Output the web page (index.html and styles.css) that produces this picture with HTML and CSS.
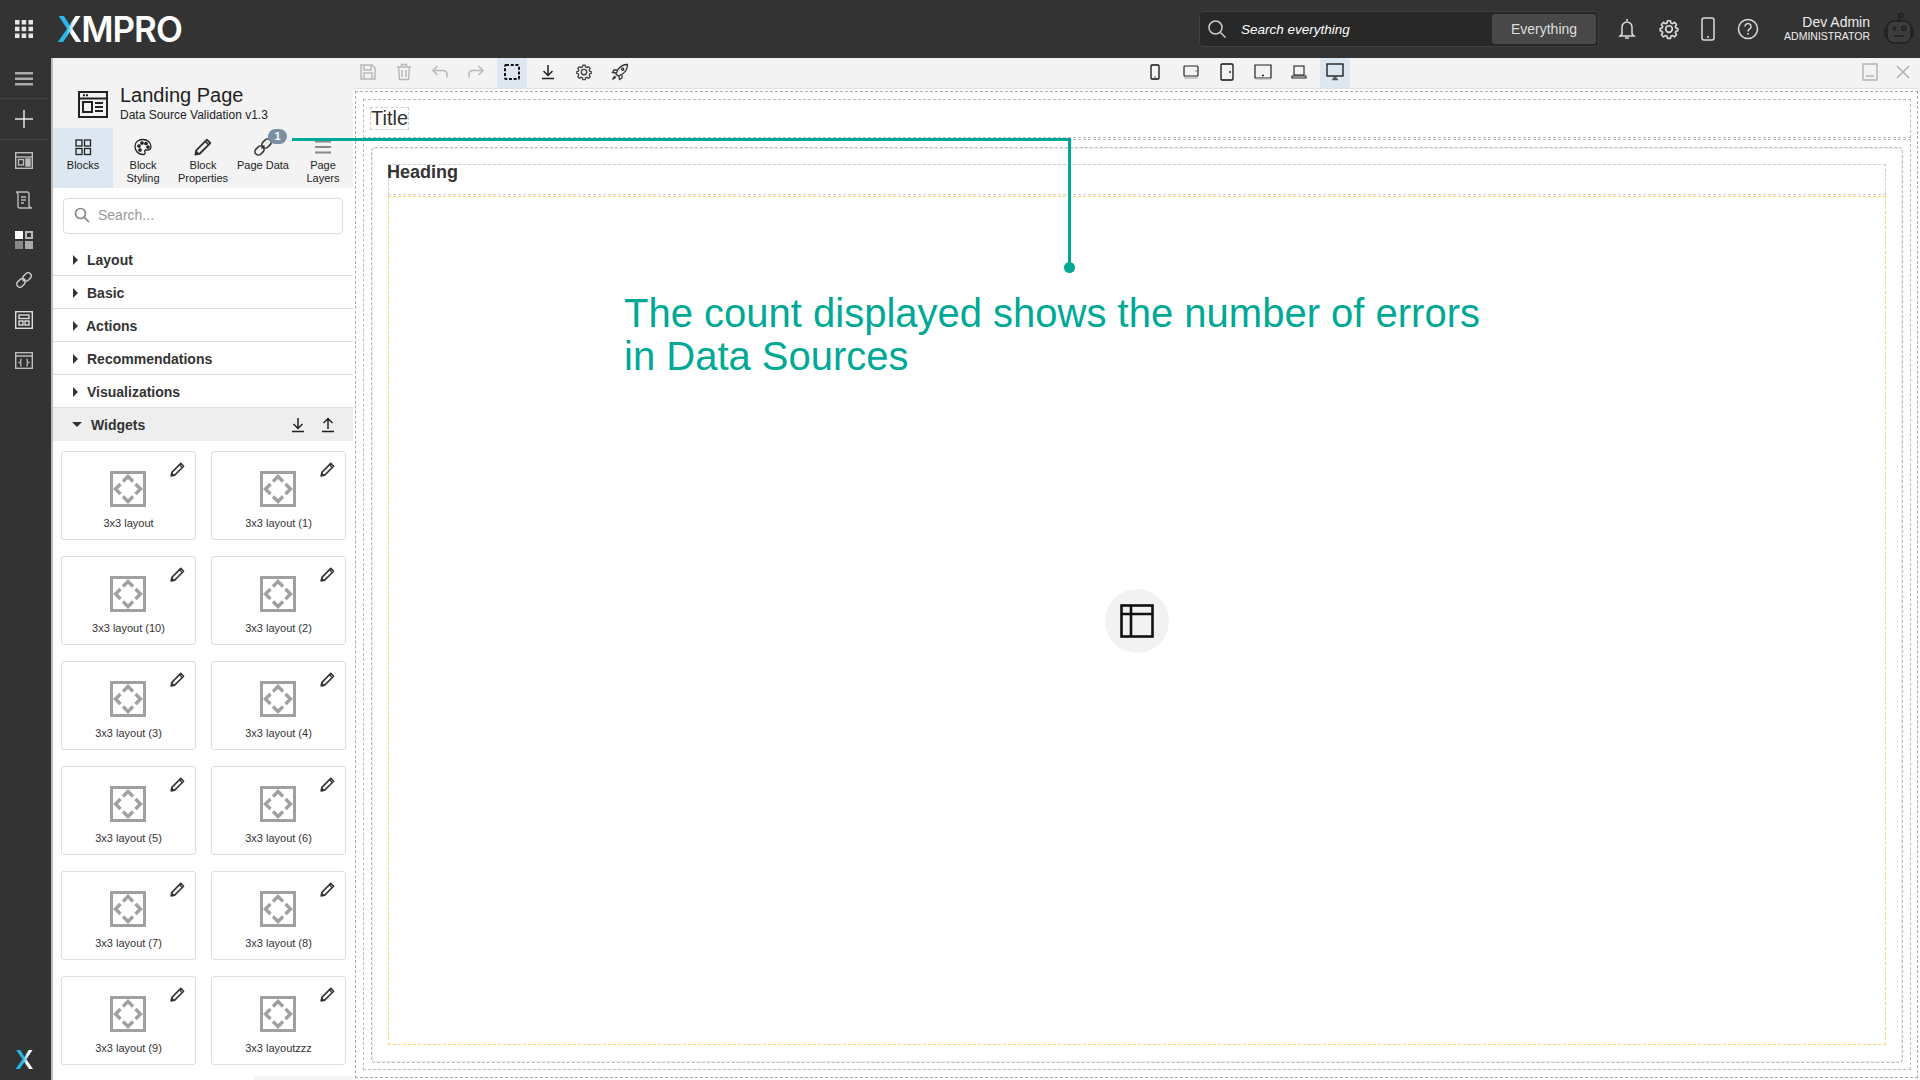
FILE: index.html
```html
<!DOCTYPE html>
<html lang="en">
<head>
  <meta charset="UTF-8" />
  <title>Landing Page</title>
  <link rel="stylesheet" href="styles.css">
</head>
<body>
  <svg class="defs" width="0" height="0">
    <symbol id="i-pencil" viewBox="0 0 16 16"><path d="M11.500 1.500l3 3L5 14l-3.800.8L2 11z" fill="none" stroke="currentColor" stroke-width="1.700" stroke-linejoin="round"/><path d="M10 3l3 3" stroke="currentColor" stroke-width="1.400"/><path d="M2 11l3 3-3.800.8z" fill="currentColor"/></symbol>
    <symbol id="i-layout" viewBox="0 0 36 36"><rect x="1.500" y="1.500" width="33" height="33" fill="none" stroke="#a0a0a0" stroke-width="3"/><path d="M13 10.500L18 5.500l5 5M25.500 13L30.500 18l-5 5M23 25.500L18 30.500l-5-5M10.500 23L5.500 18l5-5" fill="none" stroke="#a0a0a0" stroke-width="3.400"/></symbol>
    <symbol id="i-gear" viewBox="0 0 24 24"><path d="M10 2h4l.6 3 2.300 1 2.600-1.700 2.800 2.800L20.600 9.700l1 2.300 2.400.6v3l-2.400.6-1 2.300 1.700 2.600-2.800 2.800-2.600-1.700-2.300 1-.6 2.800h-4l-.6-2.800-2.300-1-2.600 1.700-2.800-2.800 1.700-2.600-1-2.300L0 15.600v-3l2.400-.6 1-2.300L1.700 7.100l2.800-2.800L7.100 6l2.300-1z" transform="translate(2.400 1.400) scale(.8)" fill="none" stroke="currentColor" stroke-width="2.200" stroke-linejoin="round"/><circle cx="12" cy="12" r="3.600" fill="none" stroke="currentColor" stroke-width="1.800"/></symbol>
    <symbol id="i-down" viewBox="0 0 16 16"><path d="M8 1v10M3.500 7L8 11.500 12.500 7M2 14.500h12" fill="none" stroke="currentColor" stroke-width="1.500"/></symbol>
    <symbol id="i-up" viewBox="0 0 16 16"><path d="M8 12V2M3.500 6L8 1.500 12.500 6M2 14.500h12" fill="none" stroke="currentColor" stroke-width="1.500"/></symbol>
    <symbol id="i-link" viewBox="0 0 20 20"><path d="M8.500 11.500l3-3" stroke="currentColor" stroke-width="1.600"/><rect x="10" y="1.500" width="7" height="10" rx="3.500" transform="rotate(45 13.500 6.500)" fill="none" stroke="currentColor" stroke-width="1.600"/><rect x="3" y="8.500" width="7" height="10" rx="3.500" transform="rotate(45 6.500 13.500)" fill="none" stroke="currentColor" stroke-width="1.600"/></symbol>
  </svg>

  <div class="app">
    <header class="topbar">
      <button class="apps" aria-label="Apps">
        <svg width="20" height="20" viewBox="0 0 20 20" fill="#e6e6e6"><rect x="1" y="1" width="4.500" height="4.500"/><rect x="7.700" y="1" width="4.500" height="4.500"/><rect x="14.500" y="1" width="4.500" height="4.500"/><rect x="1" y="7.700" width="4.500" height="4.500"/><rect x="7.700" y="7.700" width="4.500" height="4.500"/><rect x="14.500" y="7.700" width="4.500" height="4.500"/><rect x="1" y="14.500" width="4.500" height="4.500"/><rect x="7.700" y="14.500" width="4.500" height="4.500"/><rect x="14.500" y="14.500" width="4.500" height="4.500"/></svg>
      </button>
      <div class="logo"><span class="logo-x">X</span>MPRO</div>

      <div class="global-search">
        <svg width="20" height="20" viewBox="0 0 20 20" fill="none" stroke="#ccc" stroke-width="1.500"><circle cx="8.500" cy="8.500" r="6.500"/><path d="M13.500 13.500l5 5"/></svg>
        <span class="global-search-text">Search everything</span>
        <span class="scope">Everything</span>
      </div>

      <div class="top-icons">
        <svg width="18" height="22" viewBox="0 0 18 22" fill="none" stroke="#ddd" stroke-width="1.500"><path d="M9 1v2M4 16V9a5 5 0 0 1 10 0v7l2 2H2zM7 20h4"/></svg>
        <svg class="top-gear" width="22" height="22"><use href="#i-gear"/></svg>
        <svg width="14" height="24" viewBox="0 0 14 24" fill="none" stroke="#ddd" stroke-width="1.500"><rect x="1" y="1" width="12" height="22" rx="2"/><path d="M6 20h2"/></svg>
        <svg width="22" height="22" viewBox="0 0 22 22" fill="none" stroke="#ddd" stroke-width="1.500"><circle cx="11" cy="11" r="9.500"/><path d="M8 8.500a3 3 0 1 1 4.500 2.600c-1 .6-1.500 1.200-1.500 2.400M11 15v1.800"/></svg>
      </div>

      <div class="user">
        <div class="user-name">Dev Admin</div>
        <div class="user-role">ADMINISTRATOR</div>
      </div>
      <svg class="avatar" width="30" height="34" viewBox="0 0 30 34" fill="none" stroke="#1f1f1f" stroke-width="1.500"><rect x="3" y="9" width="24" height="22" rx="7" fill="#3c3c3c"/><path d="M15 9V5M3 17H1v7h2M27 17h2v7h-2M10 24h10"/><circle cx="17" cy="3.500" r="2"/><path d="M9 15l3 3m0-3l-3 3"/><circle cx="20" cy="16.500" r="2"/></svg>
    </header>

    <div class="workspace">
      <nav class="rail">
        <div class="rail-item rail-top">
          <svg width="18" height="14" viewBox="0 0 18 14" fill="#aaa"><rect width="18" height="2.500"/><rect y="5.500" width="18" height="2.500"/><rect y="11" width="18" height="2.500"/></svg>
        </div>
        <div class="rail-item rail-add">
          <svg width="18" height="18" viewBox="0 0 18 18" fill="#eee"><rect x="8.300" width="1.400" height="18"/><rect y="8.300" width="18" height="1.400"/></svg>
        </div>
        <div class="rail-item">
          <svg width="18" height="17" viewBox="0 0 18 17" fill="none" stroke="#bbb" stroke-width="1.400"><rect x=".7" y=".7" width="16.600" height="15.600"/><path d="M1 5h16"/><rect x="3.500" y="7.500" width="5" height="5.500"/><rect x="11" y="7" width="4" height="7" fill="#bbb"/></svg>
        </div>
        <div class="rail-item">
          <svg width="18" height="18" viewBox="0 0 18 18" fill="none" stroke="#bbb" stroke-width="1.400"><path d="M1 1h11c1.500 0 2 1 2 2v11c0 2 1 3 3 3H5c-1.500 0-2-1-2-2V3.500C3 2 2 1 1 1zM6 6h5M6 9h5M6 12h3"/></svg>
        </div>
        <div class="rail-item">
          <svg width="18" height="18" viewBox="0 0 18 18"><rect width="8" height="8" fill="#fff"/><rect x="10" width="8" height="8" fill="#bbb"/><rect x="12" y="2" width="4" height="4" fill="#333"/><rect y="10" width="8" height="8" fill="#888"/><rect x="10" y="10" width="8" height="8" fill="#aaa"/></svg>
        </div>
        <div class="rail-item rail-link">
          <svg width="18" height="18"><use href="#i-link"/></svg>
        </div>
        <div class="rail-item">
          <svg width="18" height="18" viewBox="0 0 18 18" fill="none" stroke="#ddd" stroke-width="1.400"><rect x=".7" y=".7" width="16.600" height="16.600"/><rect x="4" y="4" width="10" height="3.500"/><rect x="4" y="10" width="4" height="4"/><rect x="10" y="10" width="4" height="4"/></svg>
        </div>
        <div class="rail-item">
          <svg width="18" height="17" viewBox="0 0 18 17" fill="none" stroke="#bbb" stroke-width="1.400"><rect x=".7" y=".7" width="16.600" height="15.600"/><path d="M1 4h16M6.500 7C5 7 6.500 10 5 10.500 6.500 11 5 14 6.500 14M11.500 7c1.500 0 0 3 1.500 3.500-1.500.5 0 3.500-1.500 3.500"/></svg>
        </div>
        <div class="rail-logo logo-x">X</div>
      </nav>

      <aside class="panel">
        <div class="panel-head">
          <svg class="panel-icon" width="30" height="27" viewBox="0 0 30 27" fill="none" stroke="#222" stroke-width="2"><rect x="1" y="1" width="28" height="25"/><path d="M1 7.500h28"/><path d="M5 4.300h6" stroke-dasharray="2 1"/><rect x="5" y="11" width="9" height="10"/><path d="M17 12h8M17 16h8M17 20h8"/></svg>
          <div>
            <div class="panel-title">Landing Page</div>
            <div class="panel-sub">Data Source Validation v1.3</div>
          </div>
        </div>

        <div class="tabs">
          <div class="tab tab-on">
            <svg width="20" height="20" viewBox="0 0 20 20" fill="none" stroke="#222" stroke-width="1.300"><rect x="3" y="3" width="6" height="6"/><rect x="11.500" y="3" width="6" height="6"/><rect x="3" y="11.500" width="6" height="6"/><rect x="11.500" y="11.500" width="6" height="6"/></svg>
            <span>Blocks</span>
          </div>
          <div class="tab">
            <svg width="20" height="20" viewBox="0 0 20 20" fill="none" stroke="#222" stroke-width="1.300"><path d="M10 2.500c4.500 0 8 3 8 7s-3 3.500-5 3.500c-1.500 0-1.500 1-1 2s0 2.500-2 2.500c-4.500 0-8-3.500-8-8s3.500-7 8-7z"/><circle cx="6" cy="9" r="1.200" fill="#222"/><circle cx="9" cy="6" r="1.200" fill="#222"/><circle cx="13" cy="6.500" r="1.200" fill="#222"/><circle cx="15" cy="10" r="1.200" fill="#222"/><circle cx="7" cy="13" r="1.200" fill="#222"/></svg>
            <span>Block Styling</span>
          </div>
          <div class="tab">
            <svg class="tab-pencil" width="18" height="20"><use href="#i-pencil"/></svg>
            <span>Block Properties</span>
          </div>
          <div class="tab">
            <svg class="tab-link" width="20" height="20"><use href="#i-link"/></svg>
            <span class="badge">1</span>
            <span>Page Data</span>
          </div>
          <div class="tab">
            <svg width="20" height="20" viewBox="0 0 20 20" fill="#888"><rect x="2" y="3.500" width="16" height="2"/><rect x="2" y="9" width="16" height="2"/><rect x="2" y="14.500" width="16" height="2"/></svg>
            <span>Page Layers</span>
          </div>
        </div>

        <div class="search-wrap">
          <div class="search">
            <svg width="16" height="16" viewBox="0 0 16 16" fill="none" stroke="#888" stroke-width="1.700"><circle cx="6.500" cy="6.500" r="5"/><path d="M10.300 10.300L15 15"/></svg>
            <span>Search...</span>
          </div>
        </div>

        <div class="group"><i class="arrow"></i><span>Layout</span></div>
        <div class="group"><i class="arrow"></i><span>Basic</span></div>
        <div class="group"><i class="arrow"></i><span class="tight">Actions</span></div>
        <div class="group"><i class="arrow"></i><span>Recommendations</span></div>
        <div class="group"><i class="arrow"></i><span>Visualizations</span></div>
        <div class="group group-open">
          <i class="arrow-down"></i><span>Widgets</span>
          <svg class="group-act" width="16" height="16"><use href="#i-down"/></svg>
          <svg class="group-act" width="16" height="16"><use href="#i-up"/></svg>
        </div>

        <div class="cards">
          <div class="card"><svg class="card-edit" width="15" height="15"><use href="#i-pencil"/></svg><svg class="card-icon" width="36" height="36"><use href="#i-layout"/></svg><span>3x3 layout</span></div>
          <div class="card"><svg class="card-edit" width="15" height="15"><use href="#i-pencil"/></svg><svg class="card-icon" width="36" height="36"><use href="#i-layout"/></svg><span>3x3 layout (1)</span></div>
          <div class="card"><svg class="card-edit" width="15" height="15"><use href="#i-pencil"/></svg><svg class="card-icon" width="36" height="36"><use href="#i-layout"/></svg><span>3x3 layout (10)</span></div>
          <div class="card"><svg class="card-edit" width="15" height="15"><use href="#i-pencil"/></svg><svg class="card-icon" width="36" height="36"><use href="#i-layout"/></svg><span>3x3 layout (2)</span></div>
          <div class="card"><svg class="card-edit" width="15" height="15"><use href="#i-pencil"/></svg><svg class="card-icon" width="36" height="36"><use href="#i-layout"/></svg><span>3x3 layout (3)</span></div>
          <div class="card"><svg class="card-edit" width="15" height="15"><use href="#i-pencil"/></svg><svg class="card-icon" width="36" height="36"><use href="#i-layout"/></svg><span>3x3 layout (4)</span></div>
          <div class="card"><svg class="card-edit" width="15" height="15"><use href="#i-pencil"/></svg><svg class="card-icon" width="36" height="36"><use href="#i-layout"/></svg><span>3x3 layout (5)</span></div>
          <div class="card"><svg class="card-edit" width="15" height="15"><use href="#i-pencil"/></svg><svg class="card-icon" width="36" height="36"><use href="#i-layout"/></svg><span>3x3 layout (6)</span></div>
          <div class="card"><svg class="card-edit" width="15" height="15"><use href="#i-pencil"/></svg><svg class="card-icon" width="36" height="36"><use href="#i-layout"/></svg><span>3x3 layout (7)</span></div>
          <div class="card"><svg class="card-edit" width="15" height="15"><use href="#i-pencil"/></svg><svg class="card-icon" width="36" height="36"><use href="#i-layout"/></svg><span>3x3 layout (8)</span></div>
          <div class="card"><svg class="card-edit" width="15" height="15"><use href="#i-pencil"/></svg><svg class="card-icon" width="36" height="36"><use href="#i-layout"/></svg><span>3x3 layout (9)</span></div>
          <div class="card"><svg class="card-edit" width="15" height="15"><use href="#i-pencil"/></svg><svg class="card-icon" width="36" height="36"><use href="#i-layout"/></svg><span>3x3 layoutzzz</span></div>
        </div>
        <div class="panel-scroll"></div>
      </aside>

      <main class="editor">
        <div class="toolbar">
          <div class="tools">
            <button class="tool tool-off"><svg width="18" height="18" viewBox="0 0 18 18" fill="none" stroke="currentColor" stroke-width="1.500"><path d="M2 2h11l3 3v11H2zM5 2v5h7V2M5 16v-6h8v6"/></svg></button>
            <button class="tool tool-off"><svg width="18" height="18" viewBox="0 0 18 18" fill="none" stroke="currentColor" stroke-width="1.500"><path d="M2 4h14M6.500 4V1.500h5V4M3.500 4l1 12.500h9l1-12.500M7 7v7M11 7v7"/></svg></button>
            <button class="tool tool-off"><svg width="18" height="18" viewBox="0 0 18 18" fill="none" stroke="currentColor" stroke-width="1.500"><path d="M6.500 3L2 7.500 6.500 12M2 7.500h10c3 0 4 2 4 4v3"/></svg></button>
            <button class="tool tool-off"><svg width="18" height="18" viewBox="0 0 18 18" fill="none" stroke="currentColor" stroke-width="1.500"><path d="M11.500 3L16 7.500 11.500 12M16 7.500H6c-3 0-4 2-4 4v3"/></svg></button>
            <button class="tool tool-on"><svg width="18" height="18" viewBox="0 0 18 18" fill="none" stroke="#111" stroke-width="2"><rect x="2" y="2" width="14" height="14" rx="1" stroke-dasharray="3 1.700"/></svg></button>
            <button class="tool"><svg width="16" height="16"><use href="#i-down"/></svg></button>
            <button class="tool tool-soft"><svg width="18" height="18"><use href="#i-gear"/></svg></button>
            <button class="tool"><svg width="18" height="18" viewBox="0 0 18 18" fill="none" stroke="#333" stroke-width="1.300"><path d="M16.500 1.500c-4 0-7 1.500-9.500 5L5 11l2 2 4.500-2c3.500-2.500 5-5.500 5-9.500z"/><circle cx="11.700" cy="6.300" r="1.100"/><path d="M6 7H3L1.500 9.500 5 10M11 12v3l-2.500 1.500L8 13M4 13l-2.500 3.500L5 14"/></svg></button>
          </div>
          <div class="tools devices">
            <button class="tool"><svg width="10" height="16" viewBox="0 0 10 16" fill="none" stroke="#111" stroke-width="1.300"><rect x="1" y="1" width="8" height="14" rx="1"/><path d="M5 12.500v1"/></svg></button>
            <button class="tool"><svg width="16" height="14" viewBox="0 0 16 14" fill="none" stroke="#222" stroke-width="1.200"><rect x="1" y="1" width="14" height="10" rx="1"/><path d="M12.500 6h1"/><path d="M1 13h14" stroke="#aaa"/></svg></button>
            <button class="tool"><svg width="14" height="18" viewBox="0 0 14 18" fill="none" stroke="#111" stroke-width="1.300"><rect x="1" y="1" width="12" height="16" rx="1"/><path d="M10 8v2"/></svg></button>
            <button class="tool"><svg width="18" height="16" viewBox="0 0 18 16" fill="none" stroke="#222" stroke-width="1.200"><path d="M1 14V1h16v13z"/><path d="M8 11.500h2" stroke-width="1.600"/><path d="M1 15.300h16" stroke="#ccc"/></svg></button>
            <button class="tool"><svg width="16" height="14" viewBox="0 0 16 14" fill="none" stroke="#222" stroke-width="1.100"><rect x="3" y="1" width="10" height="9"/><path d="M1 11h14v2H1z"/></svg></button>
            <button class="tool tool-on"><svg width="18" height="18" viewBox="0 0 18 18" fill="none" stroke="#111" stroke-width="1.300"><rect x="1" y="1" width="16" height="12"/><path d="M6 16.500h6M8 13h2v3H8z" stroke="#555" fill="#555"/></svg></button>
          </div>
          <div class="window-btns">
            <svg width="16" height="18" viewBox="0 0 16 18" fill="none" stroke="#b5b5b5" stroke-width="1.500"><rect x="1" y="1" width="14" height="16"/><path d="M4 13h8"/></svg>
            <svg width="14" height="14" viewBox="0 0 14 14" fill="none" stroke="#aaa" stroke-width="1.300"><path d="M1 1l12 12M13 1L1 13"/></svg>
          </div>
        </div>

        <div class="canvas">
          <div class="frame">
            <div class="title-row"><span class="page-title">Title</span></div>
            <div class="body-row">
              <div class="container">
                <div class="heading">Heading</div>
                <div class="dropzone">
                  <span class="zone-icon">
                    <svg width="34" height="34" viewBox="0 0 34 34" fill="none" stroke="#111" stroke-width="2.600"><rect x="1.500" y="1.500" width="31" height="31"/><path d="M1.500 10h31M11 1.500v31"/></svg>
                  </span>
                </div>
              </div>
            </div>
          </div>
        </div>
      </main>
    </div>

    <!-- callout lies over the page -->
    <div class="callout-h"></div>
    <div class="callout-v"></div>
    <div class="callout-dot"></div>
    <div class="callout-text">The count displayed shows the number of errors<br>in Data Sources</div>
  </div>
</body>
</html>
```

FILE: styles.css
```css
* {
  box-sizing: border-box;
}

body {
  margin: 0;
  overflow: hidden;
  font-family: "Liberation Sans", Arial, sans-serif;
  color: #333;
  background: #fff;
}

button {
  padding: 0;
  border: none;
  background: none;
  font: inherit;
}

.defs {
  position: absolute;
}

.app {
  position: relative;
  width: 1920px;
  height: 1080px;
  overflow: hidden;
  display: flex;
  flex-direction: column;
}

/* top bar */
.topbar {
  height: 58px;
  flex: none;
  display: flex;
  align-items: center;
  background: #333;
  color: #eee;
}

.apps {
  width: 48px;
  display: flex;
  justify-content: center;
}

.logo {
  margin-left: 9px;
  font-family: Inter, sans-serif;
  font-weight: 600;
  font-size: 35px;
  letter-spacing: -1px;
  color: #fff;
}

.logo-x {
  font-family: Inter, sans-serif;
  font-weight: 600;
  background: linear-gradient(100deg, #29b6e8 0 45%, #fff 62%);
  -webkit-background-clip: text;
  background-clip: text;
  color: transparent;
}

.global-search {
  margin-left: auto;
  width: 400px;
  height: 36px;
  display: flex;
  align-items: center;
  padding: 0 2px 0 7px;
  background: #282828;
  border: 1px solid #3f3f3f;
  border-radius: 4px;
  color: #fff;
}

.global-search-text {
  margin-left: 14px;
  font-size: 13.5px;
  font-style: italic;
}

.scope {
  margin-left: auto;
  width: 104px;
  height: 30px;
  line-height: 30px;
  text-align: center;
  font-size: 14px;
  color: #ddd;
  background: #484848;
  border-radius: 3px;
}

.top-icons {
  width: 151px;
  margin-left: 11px;
  display: flex;
  align-items: center;
  justify-content: space-between;
  padding: 0 2px 0 8px;
}

.top-gear {
  color: #ddd;
}

.user {
  margin-left: 17px;
  width: 92px;
  text-align: right;
  color: #eee;
}

.user-name {
  font-size: 14px;
  line-height: 15px;
}

.user-role {
  font-size: 10.5px;
  line-height: 13px;
}

.avatar {
  margin: 0 6px 0 14px;
}

/* layout below the top bar */
.workspace {
  flex: 1;
  min-height: 0;
  display: flex;
}

.rail {
  position: relative;
  width: 53px;
  flex: none;
  padding: 1px 3px 0 0;
  background: #333;
  border-right: 2px solid #bbb;
}

.rail-item {
  height: 40px;
  display: flex;
  align-items: center;
  justify-content: center;
}

.rail-top {
  height: 40px;
  border-bottom: 1px solid #3f444a;
}

.rail-add {
  height: 41px;
  border-bottom: 1px solid #3f444a;
}

.rail-link {
  color: #ccc;
}

.rail-logo {
  position: absolute;
  left: 15px;
  bottom: 5px;
  font-size: 26px;
  line-height: 30px;
}

/* side panel */
.panel {
  position: relative;
  width: 300px;
  flex: none;
  background: #fff;
}

.panel-head {
  height: 70px;
  display: flex;
  align-items: flex-end;
  padding: 0 0 6px 25px;
  background: #f3f3f3;
  color: #222;
}

.panel-icon {
  margin: 0 12px 4px 0;
}

.panel-title {
  font-size: 20px;
  line-height: 26px;
}

.panel-sub {
  font-size: 12px;
  line-height: 14px;
}

.tabs {
  height: 60px;
  display: flex;
  background: #f3f3f3;
}

.tab {
  position: relative;
  width: 60px;
  padding-top: 9px;
  display: flex;
  flex-direction: column;
  align-items: center;
  text-align: center;
  font-size: 11px;
  line-height: 13px;
  color: #222;
}

.tab svg {
  flex: none;
  margin-bottom: 2px;
  color: #333;
}

.tab-on {
  background: #dde7f1;
}

.tab-link {
  margin-left: 0;
}

.badge {
  position: absolute;
  top: 1px;
  left: 35px;
  width: 19px;
  height: 15px;
  border-radius: 8px;
  background: #7b8ea3;
  color: #fff;
  font-size: 11px;
  font-weight: bold;
  line-height: 15px;
}

.search-wrap {
  height: 55px;
  padding: 10px 10px 0;
}

.search {
  height: 36px;
  display: flex;
  align-items: center;
  gap: 8px;
  padding: 0 0 2px 10px;
  border: 1px solid #ddd;
  border-radius: 4px;
  font-size: 14px;
  color: #999;
}

.group {
  height: 33px;
  display: flex;
  align-items: center;
  padding: 2px 0 0 20px;
  border-bottom: 1px solid #ddd;
  font-size: 14px;
  font-weight: bold;
  color: #333;
}

.group .tight {
  margin-left: -1px;
}

.arrow {
  width: 0;
  height: 0;
  margin-right: 9px;
  border-left: 5px solid #333;
  border-top: 5px solid transparent;
  border-bottom: 5px solid transparent;
}

.arrow-down {
  width: 0;
  height: 0;
  margin-right: 9px;
  border-top: 5px solid #333;
  border-left: 5px solid transparent;
  border-right: 5px solid transparent;
}

.group-open {
  padding: 0 0 0 19px;
  background: #eee;
  border-bottom: none;
}

.group-act {
  margin-right: 14px;
  color: #222;
}

.group-open .group-act:first-of-type {
  margin-left: auto;
}

.group-open .group-act:last-of-type {
  margin-right: 17px;
}

.cards {
  display: grid;
  grid-template-columns: 135px 135px;
  column-gap: 15px;
  row-gap: 16px;
  padding: 10px 0 0 8px;
}

.card {
  position: relative;
  height: 89px;
  padding-top: 19px;
  display: flex;
  flex-direction: column;
  align-items: center;
  border: 1px solid #ddd;
  border-radius: 3px;
  font-size: 11px;
  line-height: 13px;
}

.card-icon {
  margin: 0 2px 10px 0;
}

.card-edit {
  position: absolute;
  top: 10px;
  right: 10px;
  color: #333;
}

.panel-scroll {
  position: absolute;
  left: 201px;
  right: 0;
  bottom: 0;
  height: 4px;
  background: #f3f3f3;
}

/* editor */
.editor {
  flex: 1;
  min-width: 0;
  display: flex;
  flex-direction: column;
}

.toolbar {
  height: 31px;
  flex: none;
  display: flex;
  align-items: flex-start;
  background: #f3f3f3;
  border-bottom: 1px solid #e2e2e2;
}

.tools {
  display: flex;
  gap: 6px;
}

.tool {
  width: 30px;
  height: 30px;
  padding-bottom: 2px;
  display: flex;
  align-items: center;
  justify-content: center;
  color: #222;
}

.tool-off {
  color: #b9b9b9;
}

.tool-soft {
  color: #444;
}

.tool-on {
  background: #dde7f1;
}

.devices {
  margin-left: 505px;
}

.window-btns {
  height: 28px;
  margin-left: auto;
  padding-right: 10px;
  display: flex;
  align-items: center;
  gap: 18px;
}

.canvas {
  flex: 1;
  min-height: 0;
  padding: 2px;
}

.frame {
  height: 100%;
  display: flex;
  flex-direction: column;
  gap: 1px;
  padding: 7px 6px 7px 7px;
  border: 1px dashed #aaa;
}

.title-row {
  height: 39px;
  flex: none;
  padding: 8px 0 0 7px;
  border: 1px dashed #bbb;
}

.page-title {
  display: inline-block;
  height: 21px;
  outline: 1px dashed #ccc;
  font-size: 20px;
  line-height: 21px;
}

.body-row {
  flex: 1;
  min-height: 0;
  padding: 7px 7px 6px;
  border: 1px dashed #bbb;
}

.container {
  height: 100%;
  display: flex;
  flex-direction: column;
  gap: 1px;
  padding: 16px 16px 17px;
  border: 1px dashed #bbb;
  border-radius: 4px;
  box-shadow: 0 0 0 1px #eee inset;
}

.heading {
  height: 31px;
  flex: none;
  border: 1px dashed #ccc;
  font-size: 18px;
  font-weight: bold;
  line-height: 15px;
  text-indent: -2px;
}

.dropzone {
  flex: 1;
  display: flex;
  align-items: center;
  justify-content: center;
  border: 1px dashed #efd96a;
}

.zone-icon {
  width: 64px;
  height: 64px;
  display: flex;
  align-items: center;
  justify-content: center;
  border-radius: 50%;
  background: #f2f2f2;
}

/* annotation */
.callout-h {
  position: absolute;
  left: 292px;
  top: 138px;
  width: 779px;
  height: 3px;
  background: #00a896;
}

.callout-v {
  position: absolute;
  left: 1068px;
  top: 138px;
  width: 3px;
  height: 128px;
  background: #00a896;
}

.callout-dot {
  position: absolute;
  left: 1064px;
  top: 262px;
  width: 11px;
  height: 11px;
  border-radius: 50%;
  background: #00a896;
}

.callout-text {
  position: absolute;
  left: 624px;
  top: 292px;
  font-size: 40px;
  line-height: 43px;
  color: #00a896;
  white-space: nowrap;
}
```
